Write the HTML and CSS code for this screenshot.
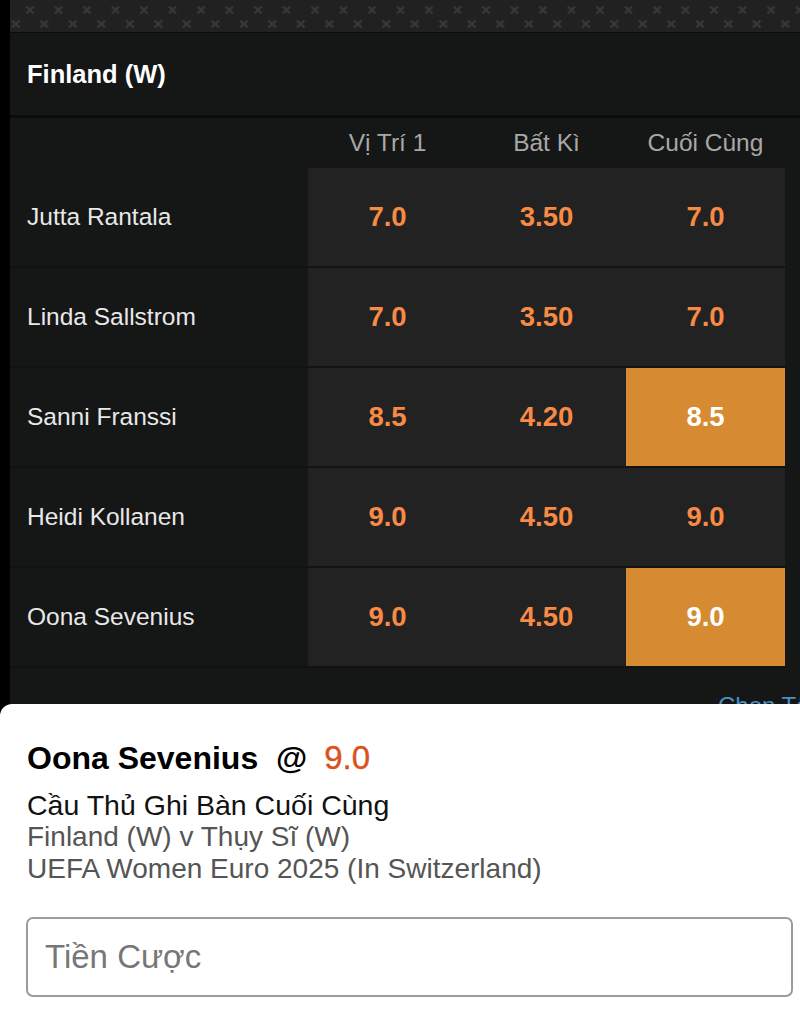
FILE: index.html
```html
<!DOCTYPE html>
<html lang="vi">
<head>
  <meta charset="UTF-8">
  <meta name="viewport" content="width=device-width, initial-scale=1.0">
  <title>Finland (W)</title>
  <link rel="stylesheet" href="styles.css">
</head>
<body>
  <div class="page">
    <svg class="pattern" width="100%" height="32">
      <defs>
        <pattern id="marks" width="28.5" height="28" patternUnits="userSpaceOnUse" x="6" y="0">
          <g stroke="#373737" stroke-width="2.4">
            <path d="M10.5 6.5 L17.5 13.5 M17.5 6.5 L10.5 13.5"/>
            <path d="M24.5 20.5 L31.5 27.5 M31.5 20.5 L24.5 27.5"/>
            <path d="M-3.5 20.5 L3.5 27.5 M3.5 20.5 L-3.5 27.5"/>
          </g>
        </pattern>
      </defs>
      <rect width="100%" height="32" fill="#212121"/>
      <rect width="100%" height="32" fill="url(#marks)"/>
    </svg>

    <div class="market-head">Finland (W)</div>

    <div class="market">
      <div class="cols">
        <span></span>
        <span>Vị Trí 1</span>
        <span>Bất Kì</span>
        <span>Cuối Cùng</span>
      </div>

      <div class="row">
        <div class="name">Jutta Rantala</div>
        <div class="odd">7.0</div>
        <div class="odd">3.50</div>
        <div class="odd">7.0</div>
      </div>
      <div class="row">
        <div class="name">Linda Sallstrom</div>
        <div class="odd">7.0</div>
        <div class="odd">3.50</div>
        <div class="odd">7.0</div>
      </div>
      <div class="row">
        <div class="name">Sanni Franssi</div>
        <div class="odd">8.5</div>
        <div class="odd">4.20</div>
        <div class="odd selected">8.5</div>
      </div>
      <div class="row">
        <div class="name">Heidi Kollanen</div>
        <div class="odd">9.0</div>
        <div class="odd">4.50</div>
        <div class="odd">9.0</div>
      </div>
      <div class="row">
        <div class="name">Oona Sevenius</div>
        <div class="odd">9.0</div>
        <div class="odd">4.50</div>
        <div class="odd selected">9.0</div>
      </div>

      <div class="more">Chọn Tất Cả</div>
    </div>
  </div>

  <div class="betslip">
    <div class="pick">Oona Sevenius <span class="at">@</span> <span class="price">9.0</span></div>
    <div class="market-name">Cầu Thủ Ghi Bàn Cuối Cùng</div>
    <div class="event">Finland (W) v Thụy Sĩ (W)</div>
    <div class="event">UEFA Women Euro 2025 (In Switzerland)</div>
    <input class="stake" type="text" placeholder="Tiền Cược">
  </div>
</body>
</html>
```

FILE: styles.css
```css
html, body {
  margin: 0;
  padding: 0;
  height: 100%;
  background: #000;
  font-family: 'Liberation Sans', Arial, sans-serif;
  overflow: hidden;
}

.page {
  margin-left: 10px;
  background: #151616;
  height: 100%;
}

.pattern {
  display: block;
}

.market-head {
  height: 82px;
  border-top: 1px solid #0b0b0b;
  border-bottom: 3px solid #0b0b0b;
  padding-left: 17px;
  display: flex;
  align-items: center;
  color: #fff;
  font-size: 25.5px;
  font-weight: bold;
}

.market {
  padding-right: 15px;
}

.cols,
.row {
  display: grid;
  grid-template-columns: 298px 1fr 1fr 1fr;
}

.cols {
  height: 50px;
  align-items: center;
  color: #a8a8a8;
  font-size: 24.5px;
  text-align: center;
}

.row {
  height: 98px;
  border-bottom: 2px solid #121212;
}

.name {
  display: flex;
  align-items: center;
  padding-left: 17px;
  color: #e8e8e8;
  font-size: 24.5px;
}

.odd {
  display: flex;
  align-items: center;
  justify-content: center;
  background: #222222;
  color: #f88a45;
  font-size: 27.5px;
  font-weight: bold;
}

.odd.selected {
  background: #d68a31;
  color: #fff;
}

.more {
  margin-right: -15px;
  padding: 24px 0 0 708px;
  color: #4a8fc4;
  font-size: 24px;
  white-space: nowrap;
  overflow: hidden;
}

.betslip {
  position: absolute;
  top: 704px;
  left: 0;
  right: -12px;
  bottom: 0;
  background: #fff;
  border-radius: 12px 12px 0 0;
  padding: 35px 0 0 27px;
  box-sizing: border-box;
}

.pick {
  font-size: 32px;
  line-height: 37px;
  font-weight: bold;
  color: #000;
  margin-bottom: 12px;
}

.pick .at {
  margin: 0 8px 0 9px;
}

.pick .price {
  color: #d9531f;
  font-weight: normal;
  font-size: 33px;
  -webkit-text-stroke: 0.4px #d9531f;
}

.market-name {
  font-size: 28.5px;
  color: #111;
  line-height: 32px;
}

.event {
  font-size: 28px;
  color: #555;
  line-height: 32px;
}

.stake {
  display: block;
  margin-top: 32px;
  width: 767px;
  height: 80px;
  box-sizing: border-box;
  border: 2px solid #9c9c9c;
  border-radius: 7px;
  padding: 0 17px;
  font-size: 33px;
  font-family: 'Liberation Sans', Arial, sans-serif;
  margin-left: -1px;
}

.stake::placeholder {
  color: #777;
}
```
